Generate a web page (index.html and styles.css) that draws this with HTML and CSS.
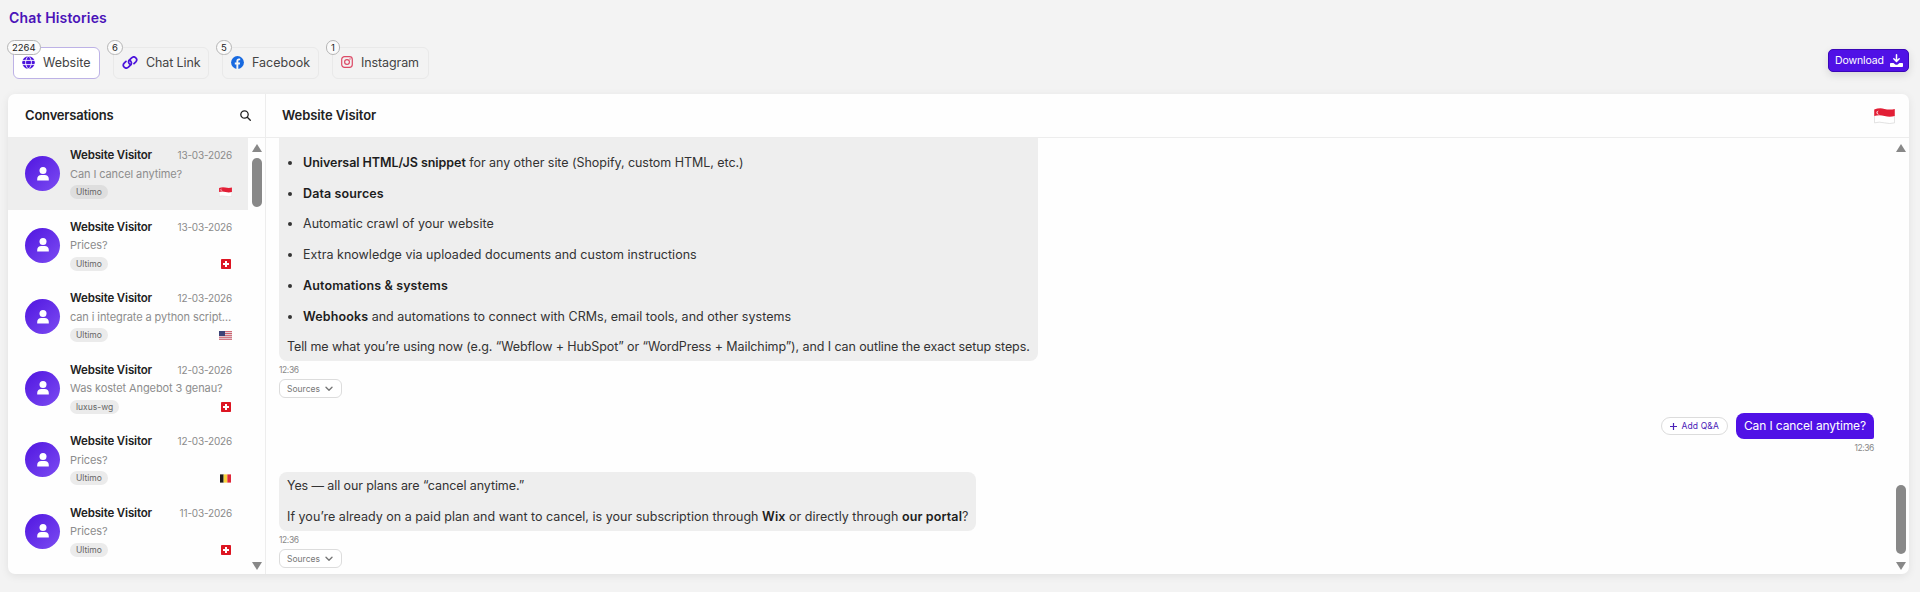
FILE: index.html
```html
<!DOCTYPE html>
<html lang="en">
<head>
  <meta charset="UTF-8">
  <meta name="viewport" content="width=device-width, initial-scale=1.0">
  <title>Chat Histories</title>
  <link rel="stylesheet" href="styles.css">
</head>
<body>
<svg class="defs" width="0" height="0">
  <symbol id="user" viewBox="0 0 12 14">
    <circle cx="6" cy="3.6" r="3.5"/>
    <path d="M0.2 13.6V12c0-2.4 1.8-4 4-4h3.6c2.2 0 4 1.6 4 4v1.6z"/>
  </symbol>
  <symbol id="sg" viewBox="0 0 18 14">
    <path fill="#fff" d="M0 1.4Q4.500-.4 9 .8T18 .8V13Q13.500 14.200 9 13T0 13z"/>
    <path fill="#e21f36" d="M0 1.4Q4.500-.4 9 .8T18 .8V7Q13.500 8.200 9 7T0 7z"/>
    <circle cx="3.600" cy="4" r="1.700" fill="#f9c7cd"/>
    <circle cx="4.500" cy="4" r="1.500" fill="#e21f36"/>
    <path fill="none" stroke="#d5d5d5" stroke-width=".6" d="M.2 7V13Q4.500 11.800 9 13T17.800 13V7"/>
  </symbol>
  <symbol id="ch" viewBox="0 0 10 10">
    <rect width="10" height="10" rx=".8" fill="#dd1522"/>
    <path fill="#fff" d="M4 2h2v2h2v2H6v2H4V6H2V4h2z"/>
  </symbol>
  <symbol id="us" viewBox="0 0 13 9">
    <rect width="13" height="9" rx=".6" fill="#e9dfe3"/>
    <path stroke="#c9505f" stroke-width=".9" d="M0 .6h13M0 2.500h13M0 4.400h13M0 6.300h13M0 8.300h13"/>
    <rect width="6" height="5" fill="#3d4478"/>
  </symbol>
  <symbol id="be" viewBox="0 0 12 9">
    <path fill="#1d1a18" d="M0 0h4v9H0z"/>
    <path fill="#f7d33c" d="M4 0h4v9H4z"/>
    <path fill="#e0283a" d="M8 0h4v9H8z"/>
  </symbol>
  <symbol id="chevron" viewBox="0 0 8 6">
    <path d="M1 1.300l3 3 3-3" fill="none" stroke="#777" stroke-width="1.400" stroke-linecap="round" stroke-linejoin="round"/>
  </symbol>
</svg>

<h1 class="title">Chat Histories</h1>

<div class="toolbar">
  <div class="tabs">
    <button class="tab tab-website active">
      <span class="count">2264</span>
      <svg width="13" height="13" viewBox="0 0 13 13">
        <circle cx="6.500" cy="6.500" r="6.300" fill="#4b12dc"/>
        <path fill="none" stroke="#fff" stroke-width=".9" d="M0 4.400h13M0 8.600h13M6.500 0C2.600 3.500 2.600 9.500 6.500 13M6.500 0c3.900 3.500 3.900 9.500 0 13"/>
      </svg>
      <span>Website</span>
    </button>
    <button class="tab tab-link">
      <span class="count">6</span>
      <svg width="16" height="13" viewBox="0 0 16 13">
        <g fill="none" stroke="#4b12dc" stroke-width="1.700" stroke-linecap="round" stroke-linejoin="round">
          <path d="M8.700 8.600C6.600 8.100 5.900 5.600 7.300 4.200l2.300-2.300c1.300-1.200 3.100-1.200 4.200-.1s1.100 2.900 0 4.100L12 7.700"/>
          <path d="M7.300 4.400C9.400 4.900 10.100 7.400 8.700 8.800l-2.300 2.300c-1.300 1.200-3.100 1.200-4.200.1s-1.100-2.900 0-4.100L4 5.300"/>
        </g>
      </svg>
      <span>Chat Link</span>
    </button>
    <button class="tab tab-facebook">
      <span class="count">5</span>
      <svg width="13" height="13" viewBox="0 0 13 13">
        <circle cx="6.500" cy="6.500" r="6.400" fill="#1769e0"/>
        <path fill="#f4f4f4" d="M5.400 13V8.400H3.800V6.500h1.600V5.100c0-1.700 1-2.600 2.500-2.600.7 0 1.300.1 1.300.1v1.600h-.8c-.8 0-1.100.5-1.100 1v1.300h1.800l-.3 1.900H7.300V13z"/>
      </svg>
      <span>Facebook</span>
    </button>
    <button class="tab tab-instagram">
      <span class="count">1</span>
      <svg width="12" height="12" viewBox="0 0 12 12">
        <g fill="none" stroke="#dc4a66" stroke-width="1.200">
          <rect x=".7" y=".7" width="10.600" height="10.600" rx="2.800"/>
          <circle cx="6" cy="6" r="2.400"/>
        </g>
        <circle cx="9" cy="3" r=".7" fill="#dc4a66"/>
      </svg>
      <span>Instagram</span>
    </button>
  </div>
  <button class="download">
    <span>Download</span>
    <svg width="13" height="13" viewBox="0 0 13 13">
      <path fill="none" stroke="#fff" stroke-width="1.500" stroke-linecap="round" stroke-linejoin="round" d="M6.500 .8v6.400M3.800 4.800l2.700 2.700 2.700-2.700"/>
      <path fill="#fff" d="M1 9h2.500l1.500 1.200c.9.700 2.100.7 3 0L9.500 9H12c.6 0 1 .4 1 1v2c0 .6-.4 1-1 1H1c-.6 0-1-.4-1-1v-2c0-.6.4-1 1-1z"/>
    </svg>
  </button>
</div>

<div class="panel">
  <aside class="sidebar">
    <div class="sidebar-header">
      <h2>Conversations</h2>
      <svg width="11" height="11" viewBox="0 0 11 11" fill="none" stroke="#222" stroke-width="1.300" stroke-linecap="round">
        <circle cx="4.500" cy="4.500" r="3.700"/>
        <path d="M7.300 7.300l3 3"/>
      </svg>
    </div>
    <div class="sidebar-body">
      <div class="list">
        <div class="item selected">
          <div class="avatar"><svg width="12" height="14"><use href="#user"/></svg></div>
          <div class="info">
            <div class="row"><span class="name">Website Visitor</span><span class="date">13-03-2026</span></div>
            <div class="preview">Can I cancel anytime?</div>
            <div class="row"><span class="tag">Ultimo</span><svg class="flag" width="13" height="10"><use href="#sg"/></svg></div>
          </div>
        </div>
        <div class="item">
          <div class="avatar"><svg width="12" height="14"><use href="#user"/></svg></div>
          <div class="info">
            <div class="row"><span class="name">Website Visitor</span><span class="date">13-03-2026</span></div>
            <div class="preview">Prices?</div>
            <div class="row"><span class="tag">Ultimo</span><svg class="flag square" width="10" height="10"><use href="#ch"/></svg></div>
          </div>
        </div>
        <div class="item">
          <div class="avatar"><svg width="12" height="14"><use href="#user"/></svg></div>
          <div class="info">
            <div class="row"><span class="name">Website Visitor</span><span class="date">12-03-2026</span></div>
            <div class="preview">can i integrate a python script…</div>
            <div class="row"><span class="tag">Ultimo</span><svg class="flag" width="13" height="9"><use href="#us"/></svg></div>
          </div>
        </div>
        <div class="item">
          <div class="avatar"><svg width="12" height="14"><use href="#user"/></svg></div>
          <div class="info">
            <div class="row"><span class="name">Website Visitor</span><span class="date">12-03-2026</span></div>
            <div class="preview">Was kostet Angebot 3 genau?</div>
            <div class="row"><span class="tag">luxus-wg</span><svg class="flag square" width="10" height="10"><use href="#ch"/></svg></div>
          </div>
        </div>
        <div class="item">
          <div class="avatar"><svg width="12" height="14"><use href="#user"/></svg></div>
          <div class="info">
            <div class="row"><span class="name">Website Visitor</span><span class="date">12-03-2026</span></div>
            <div class="preview">Prices?</div>
            <div class="row"><span class="tag">Ultimo</span><svg class="flag square" width="11" height="9"><use href="#be"/></svg></div>
          </div>
        </div>
        <div class="item">
          <div class="avatar"><svg width="12" height="14"><use href="#user"/></svg></div>
          <div class="info">
            <div class="row"><span class="name">Website Visitor</span><span class="date">11-03-2026</span></div>
            <div class="preview">Prices?</div>
            <div class="row"><span class="tag">Ultimo</span><svg class="flag square" width="10" height="10"><use href="#ch"/></svg></div>
          </div>
        </div>
      </div>
      <div class="scrollbar">
        <span class="arrow-up"></span>
        <span class="thumb"></span>
        <span class="arrow-down"></span>
      </div>
    </div>
  </aside>

  <main class="chat">
    <div class="chat-header">
      <h2>Website Visitor</h2>
      <svg width="21" height="16"><use href="#sg"/></svg>
    </div>
    <div class="chat-body">
      <div class="messages">
        <div class="message">
          <div class="bubble long">
            <ul>
              <li class="tight"><b>Universal HTML/JS snippet</b> for any other site (Shopify, custom HTML, etc.)</li>
              <li><b>Data sources</b></li>
              <li>Automatic crawl of your website</li>
              <li>Extra knowledge via uploaded documents and custom instructions</li>
              <li><b>Automations &amp; systems</b></li>
              <li><b>Webhooks</b> and automations to connect with CRMs, email tools, and other systems</li>
            </ul>
            <p class="tighter">Tell me what you’re using now (e.g. “Webflow + HubSpot” or “WordPress + Mailchimp”), and I can outline the exact setup steps.</p>
          </div>
          <div class="time">12:36</div>
          <button class="sources">Sources <svg width="8" height="6"><use href="#chevron"/></svg></button>
        </div>

        <div class="message mine">
          <div class="reply">
            <button class="add"><svg width="7" height="7" viewBox="0 0 7 7"><path d="M3.500 0v7M0 3.500h7" stroke="#4b22b8" stroke-width="1.200"/></svg>Add Q&amp;A</button>
            <div class="bubble">Can I cancel anytime?</div>
          </div>
          <div class="time">12:36</div>
        </div>

        <div class="message">
          <div class="bubble">
            <p class="tighter">Yes — all our plans are “cancel anytime.”</p>
            <p>If you’re already on a paid plan and want to cancel, is your subscription through <b>Wix</b> or directly through <b>our portal</b>?</p>
          </div>
          <div class="time">12:36</div>
          <button class="sources">Sources <svg width="8" height="6"><use href="#chevron"/></svg></button>
        </div>
      </div>
      <div class="scrollbar">
        <span class="arrow-up"></span>
        <span class="thumb"></span>
        <span class="arrow-down"></span>
      </div>
    </div>
  </main>
</div>
</body>
</html>
```

FILE: styles.css
```css
* {
  box-sizing: border-box;
}
body {
  margin: 0;
  height: 592px;
  padding: 10px 11px 18px 8px;
  display: flex;
  flex-direction: column;
  overflow: hidden;
  background-color: #f3f3f3;
  color: #222;
  font-family: Inter, "Noto Sans", sans-serif;
  font-size: 12.5px;
}
.defs {
  position: absolute;
}
h1, h2, p, ul {
  margin: 0;
}
button {
  font-family: inherit;
  padding: 0;
  cursor: pointer;
}
.title {
  height: 18px;
  padding-left: 1px;
  line-height: 15px;
  font-size: 14px;
  font-weight: 600;
  letter-spacing: 0.15px;
  color: #4a12b8;
}
.toolbar {
  display: flex;
  justify-content: space-between;
  padding: 19px 0 0 5px;
  height: 66px;
}
.tabs {
  display: flex;
  gap: 13px;
}
.tab {
  position: relative;
  display: flex;
  align-items: center;
  height: 32px;
  padding: 0 0 2px 8px;
  border: 1px solid #e9e9e9;
  border-radius: 6px;
  background-color: transparent;
  color: #444;
  font-size: 12.5px;
}
.tab.active {
  background-color: #fff;
  border-color: #bdb2e6;
}
.tab svg {
  margin-right: 8px;
}
.tab-website { width: 87px; }
.tab-link {
  width: 96px;
  letter-spacing: -0.12px;
}
.tab-facebook { width: 97px; }
.tab-instagram {
  width: 97px;
  letter-spacing: -0.1px;
}
.count {
  position: absolute;
  left: -7px;
  top: -8px;
  height: 15px;
  padding: 0 4px;
  line-height: 13px;
  border: 1px solid #b5b5b5;
  border-radius: 8px;
  background-color: #fafafa;
  color: #222;
  font-size: 9.5px;
  letter-spacing: 0;
}
.download {
  display: flex;
  align-items: center;
  justify-content: space-between;
  margin-top: 2px;
  width: 81px;
  height: 23px;
  padding: 0 5px 0 6px;
  border: 1px solid #3a06b8;
  border-radius: 5px;
  background-color: #5011e6;
  color: #fff;
  font-size: 10.5px;
  letter-spacing: -0.1px;
  box-shadow: 0 3px 8px rgba(0, 0, 0, 0.12);
}
.panel {
  flex: 1;
  display: flex;
  min-height: 0;
  border-radius: 7px;
  background-color: #fefefe;
  box-shadow: 0 2px 8px rgba(0, 0, 0, 0.08);
  overflow: hidden;
}
.sidebar {
  width: 258px;
  display: flex;
  flex-direction: column;
  border-right: 1px solid #ededed;
}
.sidebar-header, .chat-header {
  display: flex;
  align-items: center;
  justify-content: space-between;
  height: 44px;
  flex-shrink: 0;
  border-bottom: 1px solid #ededed;
}
.sidebar-header {
  padding: 0 14px 0 17px;
}
h2 {
  padding-bottom: 2px;
  font-size: 13px;
  font-weight: 600;
  letter-spacing: -0.08px;
}
.sidebar-header h2 {
  letter-spacing: -0.2px;
}
.sidebar-body, .chat-body {
  flex: 1;
  display: flex;
  min-height: 0;
}
.list {
  width: 240px;
  overflow: hidden;
}
.item {
  display: flex;
  align-items: center;
  height: 71.5px;
  padding: 0 16px 0 17px;
}
.item.selected {
  background-color: #eee;
}
.avatar {
  display: flex;
  align-items: center;
  justify-content: center;
  flex-shrink: 0;
  width: 35px;
  height: 35px;
  margin-right: 10px;
  border-radius: 50%;
  background: linear-gradient(135deg, #5015e0, #7c4cf2);
  fill: #fff;
}
.info {
  flex: 1;
  min-width: 0;
}
.row {
  display: flex;
  align-items: center;
  justify-content: space-between;
  height: 17px;
}
.name {
  font-size: 11.5px;
  font-weight: 600;
  letter-spacing: -0.16px;
}
.date {
  font-size: 10px;
  letter-spacing: -0.18px;
  color: #8a8a8a;
}
.preview {
  height: 20px;
  line-height: 20px;
  font-size: 11px;
  letter-spacing: -0.1px;
  color: #8d8d8d;
  white-space: nowrap;
}
.tag {
  height: 14px;
  padding: 0 6px;
  line-height: 14px;
  border-radius: 7px;
  background-color: #ebebeb;
  color: #666;
  font-size: 8.5px;
}
.selected .tag {
  background-color: #dedede;
}
.flag.square {
  margin-right: 1px;
}
.scrollbar {
  display: flex;
  flex-direction: column;
  align-items: center;
  width: 17px;
  padding: 6px 0 4px;
}
.arrow-up, .arrow-down {
  border: 5px solid transparent;
}
.arrow-up {
  border-top: 0;
  border-bottom: 8px solid #888;
}
.arrow-down {
  margin-top: auto;
  border-bottom: 0;
  border-top: 8px solid #888;
}
.thumb {
  width: 10px;
  border-radius: 5px;
  background-color: #888;
}
.sidebar .thumb {
  height: 49px;
  margin-top: 6px;
}
.chat {
  flex: 1;
  display: flex;
  flex-direction: column;
  min-width: 0;
}
.chat-header {
  padding: 0 14px 0 16px;
}
.messages {
  flex: 1;
  display: flex;
  flex-direction: column;
  justify-content: flex-end;
  padding: 0 18px 6px 13px;
  overflow: hidden;
}
.message {
  display: flex;
  flex-direction: column;
  align-items: flex-start;
}
.mine {
  align-items: flex-end;
  margin: 15px 0;
}
.bubble {
  padding: 4px 8px;
  border-radius: 8px;
  background-color: #eee;
  line-height: 20px;
  letter-spacing: 0.02px;
  color: #333;
  white-space: nowrap;
}
.bubble.long {
  padding-top: 30px;
}
.bubble b {
  font-weight: 600;
  letter-spacing: 0.12px;
  color: #1d1d1d;
}
.bubble .tight, .bubble .tight b {
  letter-spacing: -0.045px;
}
.bubble .tighter {
  letter-spacing: -0.095px;
}
.bubble ul {
  padding-left: 16px;
}
.bubble li {
  margin-bottom: 10.75px;
}
.bubble p + p {
  margin-top: 10.75px;
}
.time {
  height: 18px;
  line-height: 18px;
  font-size: 8.5px;
  letter-spacing: -0.4px;
  color: #888;
}
.sources {
  display: flex;
  align-items: center;
  gap: 5px;
  width: 63px;
  height: 19px;
  padding: 0 7px;
  border: 1px solid #dcdcdc;
  border-radius: 6px;
  background-color: #fff;
  font-size: 8.5px;
  color: #777;
}
.reply {
  display: flex;
  align-items: center;
  gap: 8px;
}
.mine .bubble {
  padding: 3px 8px;
  border-radius: 8px 8px 2px 8px;
  background-color: #5011e6;
  color: #fff;
  font-size: 12px;
  letter-spacing: -0.12px;
}
.add {
  display: flex;
  align-items: center;
  gap: 4px;
  height: 18px;
  padding: 0 8px;
  border: 1px solid #dcdcdc;
  border-radius: 9px;
  background-color: #fff;
  font-size: 8.5px;
  letter-spacing: 0.15px;
  color: #4b22b8;
}
.chat .thumb {
  height: 69px;
  margin-top: auto;
}
.chat .arrow-down {
  margin-top: 8px;
}
```
